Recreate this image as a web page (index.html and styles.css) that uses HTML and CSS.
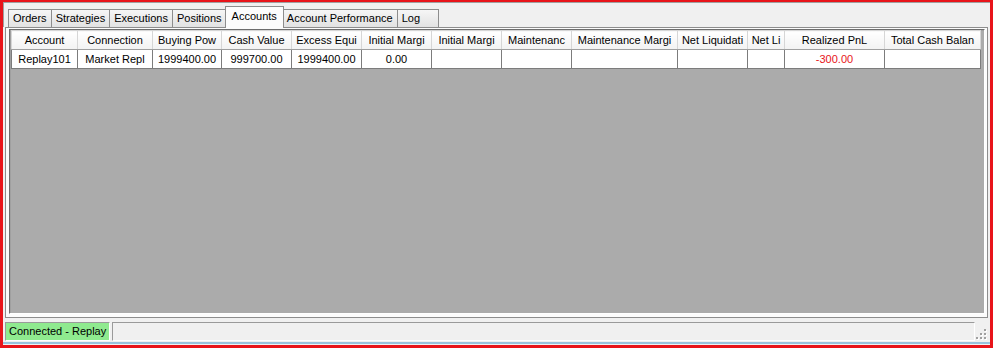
FILE: index.html
```html
<!DOCTYPE html>
<html>
<head>
<title>Accounts</title>
<link rel="stylesheet" href="styles.css">
</head>
<body>

<div class="window">
    <div class="tabs">
        <div class="tab">Orders</div>
        <div class="tab">Strategies</div>
        <div class="tab">Executions</div>
        <div class="tab">Positions</div>
        <div class="tab active">Accounts</div>
        <div class="tab">Account Performance</div>
        <div class="tab log">Log</div>
    </div>

    <div class="panel">
        <div class="grid">
            <table class="accounts">
                <colgroup>
                    <col style="width:66px">
                    <col style="width:75px">
                    <col style="width:69px">
                    <col style="width:70px">
                    <col style="width:70px">
                    <col style="width:70px">
                    <col style="width:70px">
                    <col style="width:70px">
                    <col style="width:106px">
                    <col style="width:70px">
                    <col style="width:37px">
                    <col style="width:100px">
                    <col style="width:96px">
                </colgroup>
                <tr>
                    <th>Account</th>
                    <th>Connection</th>
                    <th>Buying Pow</th>
                    <th>Cash Value</th>
                    <th>Excess Equi</th>
                    <th>Initial Margi</th>
                    <th>Initial Margi</th>
                    <th>Maintenanc</th>
                    <th>Maintenance Margi</th>
                    <th>Net Liquidati</th>
                    <th>Net Li</th>
                    <th>Realized PnL</th>
                    <th>Total Cash Balan</th>
                </tr>
                <tr>
                    <td>Replay101</td>
                    <td>Market Repl</td>
                    <td>1999400.00</td>
                    <td>999700.00</td>
                    <td>1999400.00</td>
                    <td>0.00</td>
                    <td></td>
                    <td></td>
                    <td></td>
                    <td></td>
                    <td></td>
                    <td class="loss">-300.00</td>
                    <td></td>
                </tr>
            </table>
        </div>
    </div>

    <div class="status">
        <div class="connected">Connected - Replay</div>
        <div class="field"></div>
        <div class="grip">
            <span></span><span></span><span></span>
            <span></span><span></span><span></span>
        </div>
    </div>
</div>

</body>
</html>
```

FILE: styles.css
```css
body {
    margin: 0;
    padding: 0;
    font-family: "Liberation Sans", Arial, sans-serif;
    font-size: 11px;
    color: #000;
}
.window {
    width: 993px;
    height: 348px;
    box-sizing: border-box;
    border: 3px solid #e8141a;
    border-top-width: 2px;
    background-color: #f0f0f0;
    display: flex;
    flex-direction: column;
}
.tabs {
    display: flex;
    align-items: flex-end;
    height: 24px;
    padding-left: 4px;
    border-top: 1px solid #a0a0a0;
    border-left: 1px solid #a0a0a0;
}
.tab {
    height: 17px;
    line-height: 17px;
    padding: 0 4px;
    background: linear-gradient(#f6f6f6, #e2e2e2);
    border: 1px solid #8d8d8d;
    border-bottom: none;
    margin-right: -1px;
    white-space: nowrap;
}
.tab.log {
    width: 32px;
}
.tab.active {
    height: 20px;
    line-height: 18px;
    padding: 0 6px;
    background: #fcfcfc;
    position: relative;
    z-index: 1;
    margin-bottom: -1px;
    margin-left: -1px;
    margin-right: -2px;
    padding-bottom: 1px;
}
.panel {
    margin: 0 2px 0 2px;
    height: 291px;
    box-sizing: border-box;
    border: 1px solid #8d8d8d;
    background: #fcfcfc;
    padding: 1px 2px 3px 3px;
}
.grid {
    height: 100%;
    box-sizing: border-box;
    background-color: #ababab;
    border: 1px solid #6d6d6d;
    border-right-color: #fff;
    border-bottom-color: #fff;
    box-shadow: inset 1px 1px 0 #a0a0a0;
    padding: 0 0 0 1px;
}
.accounts {
    border-collapse: collapse;
    table-layout: fixed;
    width: 969px;
}
.accounts th,
.accounts td {
    border: 1px solid #a0a0a0;
    padding: 0 3px;
    overflow: hidden;
    white-space: nowrap;
    text-align: center;
    font-weight: normal;
}
.accounts th {
    height: 18px;
    background: linear-gradient(#ffffff, #f2f2f2);
    border-color: #d6d6d6;
    border-bottom-color: #a0a0a0;
}
.accounts td {
    height: 18px;
    background-color: #fff;
    border-color: #7c7c7c;
}
.loss {
    color: #e8141a;
}
.status {
    display: flex;
    align-items: center;
    height: 22px;
    padding: 2px 2px 0 2px;
    border-bottom: 2px solid #98c2dd;
}
.connected {
    height: 17px;
    line-height: 17px;
    padding: 0 3px;
    background-color: #8fea8f;
    border: 1px solid #9a9a9a;
    border-right-color: #fff;
    border-bottom-color: #fff;
    white-space: nowrap;
}
.field {
    flex: 1;
    height: 17px;
    margin-left: 2px;
    border: 1px solid #9a9a9a;
    border-right-color: #fff;
    border-bottom-color: #fff;
}
.grip {
    width: 13px;
    height: 17px;
    position: relative;
}
.grip span {
    position: absolute;
    width: 2px;
    height: 2px;
    background: #a0a0a0;
    box-shadow: 1px 1px 0 #fff;
}
.grip span:nth-child(1) { right: 2px; bottom: 1px; }
.grip span:nth-child(2) { right: 6px; bottom: 1px; }
.grip span:nth-child(3) { right: 10px; bottom: 1px; }
.grip span:nth-child(4) { right: 2px; bottom: 5px; }
.grip span:nth-child(5) { right: 6px; bottom: 5px; }
.grip span:nth-child(6) { right: 2px; bottom: 9px; }
```
